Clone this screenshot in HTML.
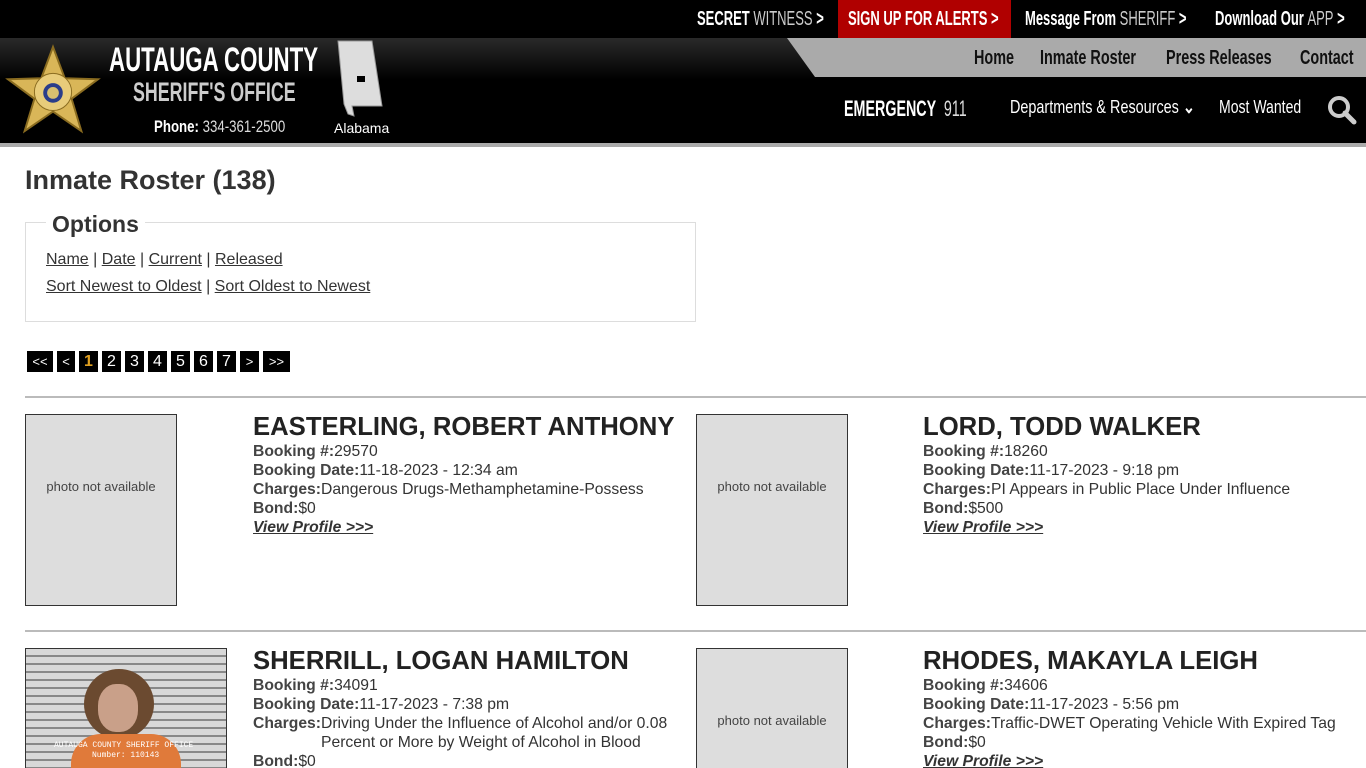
<!DOCTYPE html>
<html style="width:1366px;height:768px;overflow:hidden"><head><meta charset="utf-8"><style>
*{margin:0;padding:0;box-sizing:border-box}
body{width:1366px;height:768px;overflow:hidden;background:#fff;font-family:"Liberation Sans",sans-serif;color:#333;position:relative}
.a{position:absolute;white-space:nowrap}
.c{display:inline-block;transform:scaleX(.72);transform-origin:left center;font-weight:bold}
#top{position:absolute;left:0;top:0;width:1366px;height:38px;background:#000}
#hdr{position:absolute;left:0;top:38px;width:1366px;height:105px;background:linear-gradient(#2a2a2a,#000 40%,#000)}
#bar{position:absolute;left:0;top:143px;width:1366px;height:4px;background:#aaa}
.t{color:#fff;font-size:20px;top:8px}
.t .c{transform:scaleX(.65)}
.g{color:#ccc;font-weight:normal}
a{color:#333;text-decoration:underline}
.pg{position:absolute;top:351px;height:21px;background:#000;color:#fff;font-size:16px;text-align:center;line-height:21px}
.hr{position:absolute;left:25px;width:1341px;height:2px;background:#bbb}
.ph{position:absolute;width:152px;height:192px;background:#ddd;border:1px solid #333;font-size:13px;color:#444;text-align:center;line-height:144px}
.nm{position:absolute;font-size:25.7px;font-weight:bold;color:#222;white-space:nowrap}
.d{position:absolute;font-size:15.7px;line-height:19px;color:#333}
.d b{color:#444}
.d .vp{font-weight:bold;font-style:italic;text-decoration:underline;color:#333}
.row{display:flex}
</style></head><body>
<div id="top"></div>
<div class="a" style="left:838px;top:0;width:173px;height:38px;background:#b00000"></div>
<div class="a t" style="left:697px"><span class="c">SECRET <span class="g">WITNESS</span> &gt;</span></div>
<div class="a t" style="left:848px"><span class="c">SIGN UP FOR ALERTS &gt;</span></div>
<div class="a t" style="left:1025px"><span class="c">Message From <span class="g">SHERIFF</span> &gt;</span></div>
<div class="a t" style="left:1215px"><span class="c">Download Our <span class="g">APP</span> &gt;</span></div>
<div id="hdr"></div>
<div class="a" style="left:787px;top:38px;width:579px;height:39px;background:#aaa;clip-path:polygon(0 0,100% 0,100% 100%,28px 100%)"></div>
<div class="a" style="left:974px;top:47px;font-size:20px;color:#111"><span class="c">Home</span></div>
<div class="a" style="left:1040px;top:47px;font-size:20px;color:#111"><span class="c">Inmate Roster</span></div>
<div class="a" style="left:1166px;top:47px;font-size:20px;color:#111"><span class="c">Press Releases</span></div>
<div class="a" style="left:1300px;top:47px;font-size:20px;color:#111"><span class="c">Contact</span></div>
<div class="a" style="left:844px;top:96px;font-size:22px;color:#fff"><span class="c" style="transform:scaleX(.65)">EMERGENCY <span style="font-weight:normal;color:#ddd">&nbsp;911</span></span></div>
<div class="a" style="left:1010px;top:97px;font-size:18px;color:#fff"><span class="c" style="font-weight:normal;transform:scaleX(.8)">Departments &amp; Resources <b>&#8964;</b></span></div>
<div class="a" style="left:1219px;top:97px;font-size:18px;color:#fff"><span class="c" style="font-weight:normal;transform:scaleX(.78)">Most Wanted</span></div>
<svg class="a" style="left:1326px;top:94px" width="32" height="32" viewBox="0 0 32 32"><circle cx="13" cy="13" r="9" fill="none" stroke="#ccc" stroke-width="4"/><path d="M19 19l9 9" stroke="#ccc" stroke-width="5" stroke-linecap="round"/></svg>
<svg class="a" style="left:4px;top:43px" width="98" height="93" viewBox="0 0 100 95"><polygon points="50,4 62,36 96,37 69,57 79,90 50,70 21,90 31,57 4,37 38,36" fill="#d9b658" stroke="#8a6c20" stroke-width="2"/><circle cx="50" cy="50" r="19" fill="#e8cc7a" stroke="#8a6c20"/><circle cx="50" cy="51" r="10" fill="#2a3d8a"/><circle cx="50" cy="51" r="6" fill="#d8c070"/></svg>
<div class="a" style="left:109px;top:41px;font-size:34px;color:#fff"><span class="c" style="transform:scaleX(.655)">AUTAUGA COUNTY</span></div>
<div class="a" style="left:133px;top:77px;font-size:27px;color:#ccc"><span class="c" style="transform:scaleX(.66)">SHERIFF'S OFFICE</span></div>
<div class="a" style="left:154px;top:117px;font-size:17px;color:#fff"><span class="c" style="transform:scaleX(.78)">Phone: <span style="font-weight:normal;color:#ddd">334-361-2500</span></span></div>
<svg class="a" style="left:334px;top:40px" width="52" height="78" viewBox="0 0 52 78"><path d="M4 1h34l10 65H18l2 10-6-2-4-10z" fill="#ddd" stroke="#999"/><rect x="23" y="36" width="8" height="6" fill="#000"/></svg>
<div class="a" style="left:334px;top:120px;font-size:14px;color:#fff">Alabama</div>
<div id="bar"></div>

<div class="a" style="left:25px;top:165px;font-size:27px;font-weight:bold;color:#333">Inmate Roster (138)</div>
<div class="a" style="left:25px;top:222px;width:671px;height:100px;border:1px solid #ddd"></div>
<div class="a" style="left:46px;top:211px;font-size:23px;font-weight:bold;background:#fff;padding:0 6px;color:#333">Options</div>
<div class="a" style="left:46px;top:251px;font-size:16px"><a>Name</a> | <a>Date</a> | <a>Current</a> | <a>Released</a></div>
<div class="a" style="left:46px;top:278px;font-size:16px"><a>Sort Newest to Oldest</a> | <a>Sort Oldest to Newest</a></div>

<div class="pg" style="left:27px;width:26px;font-size:13px">&lt;&lt;</div>
<div class="pg" style="left:57px;width:18px;font-size:13px">&lt;</div>
<div class="pg" style="left:79px;width:19px;color:#e0a020;font-weight:bold">1</div>
<div class="pg" style="left:102px;width:19px">2</div>
<div class="pg" style="left:125px;width:19px">3</div>
<div class="pg" style="left:148px;width:19px">4</div>
<div class="pg" style="left:171px;width:19px">5</div>
<div class="pg" style="left:194px;width:19px">6</div>
<div class="pg" style="left:217px;width:19px">7</div>
<div class="pg" style="left:240px;width:19px;font-size:13px">&gt;</div>
<div class="pg" style="left:263px;width:27px;font-size:13px">&gt;&gt;</div>

<div class="hr" style="top:396px"></div>
<div class="ph" style="left:25px;top:414px">photo not available</div>
<div class="nm" style="left:253px;top:413px">EASTERLING, ROBERT ANTHONY</div>
<div class="d" style="left:253px;top:442px"><b>Booking #:</b>29570<br><b>Booking Date:</b>11-18-2023 - 12:34 am<br><b>Charges:</b>Dangerous Drugs-Methamphetamine-Possess<br><b>Bond:</b>$0<br><span class="vp">View Profile &gt;&gt;&gt;</span></div>
<div class="ph" style="left:696px;top:414px">photo not available</div>
<div class="nm" style="left:923px;top:413px">LORD, TODD WALKER</div>
<div class="d" style="left:923px;top:442px"><b>Booking #:</b>18260<br><b>Booking Date:</b>11-17-2023 - 9:18 pm<br><b>Charges:</b>PI Appears in Public Place Under Influence<br><b>Bond:</b>$500<br><span class="vp">View Profile &gt;&gt;&gt;</span></div>

<div class="hr" style="top:630px"></div>
<div class="a" style="left:25px;top:648px;width:202px;height:122px;border:1px solid #333;background:repeating-linear-gradient(#d8d8d8 0 6px,#888 6px 8px);overflow:hidden">
<div class="a" style="left:58px;top:20px;width:70px;height:70px;border-radius:50%;background:#6b4a30"></div>
<div class="a" style="left:72px;top:35px;width:40px;height:48px;border-radius:45%;background:#c9a089"></div>
<div class="a" style="left:45px;top:85px;width:110px;height:40px;border-radius:30px 30px 0 0;background:#e07a3a"></div>
<div class="a" style="left:28px;top:92px;font-size:8px;color:#fff;font-family:'Liberation Mono',monospace">AUTAUGA COUNTY SHERIFF OFFICE</div>
<div class="a" style="left:66px;top:102px;font-size:8px;color:#fff;font-family:'Liberation Mono',monospace">Number: 110143</div>
</div>
<div class="nm" style="left:253px;top:647px">SHERRILL, LOGAN HAMILTON</div>
<div class="d" style="left:253px;top:676px;width:430px"><b>Booking #:</b>34091<br><b>Booking Date:</b>11-17-2023 - 7:38 pm<br><div class="row"><b>Charges:</b><span>Driving Under the Influence of Alcohol and/or 0.08 Percent or More by Weight of Alcohol in Blood</span></div><b>Bond:</b>$0</div>
<div class="ph" style="left:696px;top:648px">photo not available</div>
<div class="nm" style="left:923px;top:647px">RHODES, MAKAYLA LEIGH</div>
<div class="d" style="left:923px;top:676px"><b>Booking #:</b>34606<br><b>Booking Date:</b>11-17-2023 - 5:56 pm<br><b>Charges:</b>Traffic-DWET Operating Vehicle With Expired Tag<br><b>Bond:</b>$0<br><span class="vp">View Profile &gt;&gt;&gt;</span></div>
</body></html>
